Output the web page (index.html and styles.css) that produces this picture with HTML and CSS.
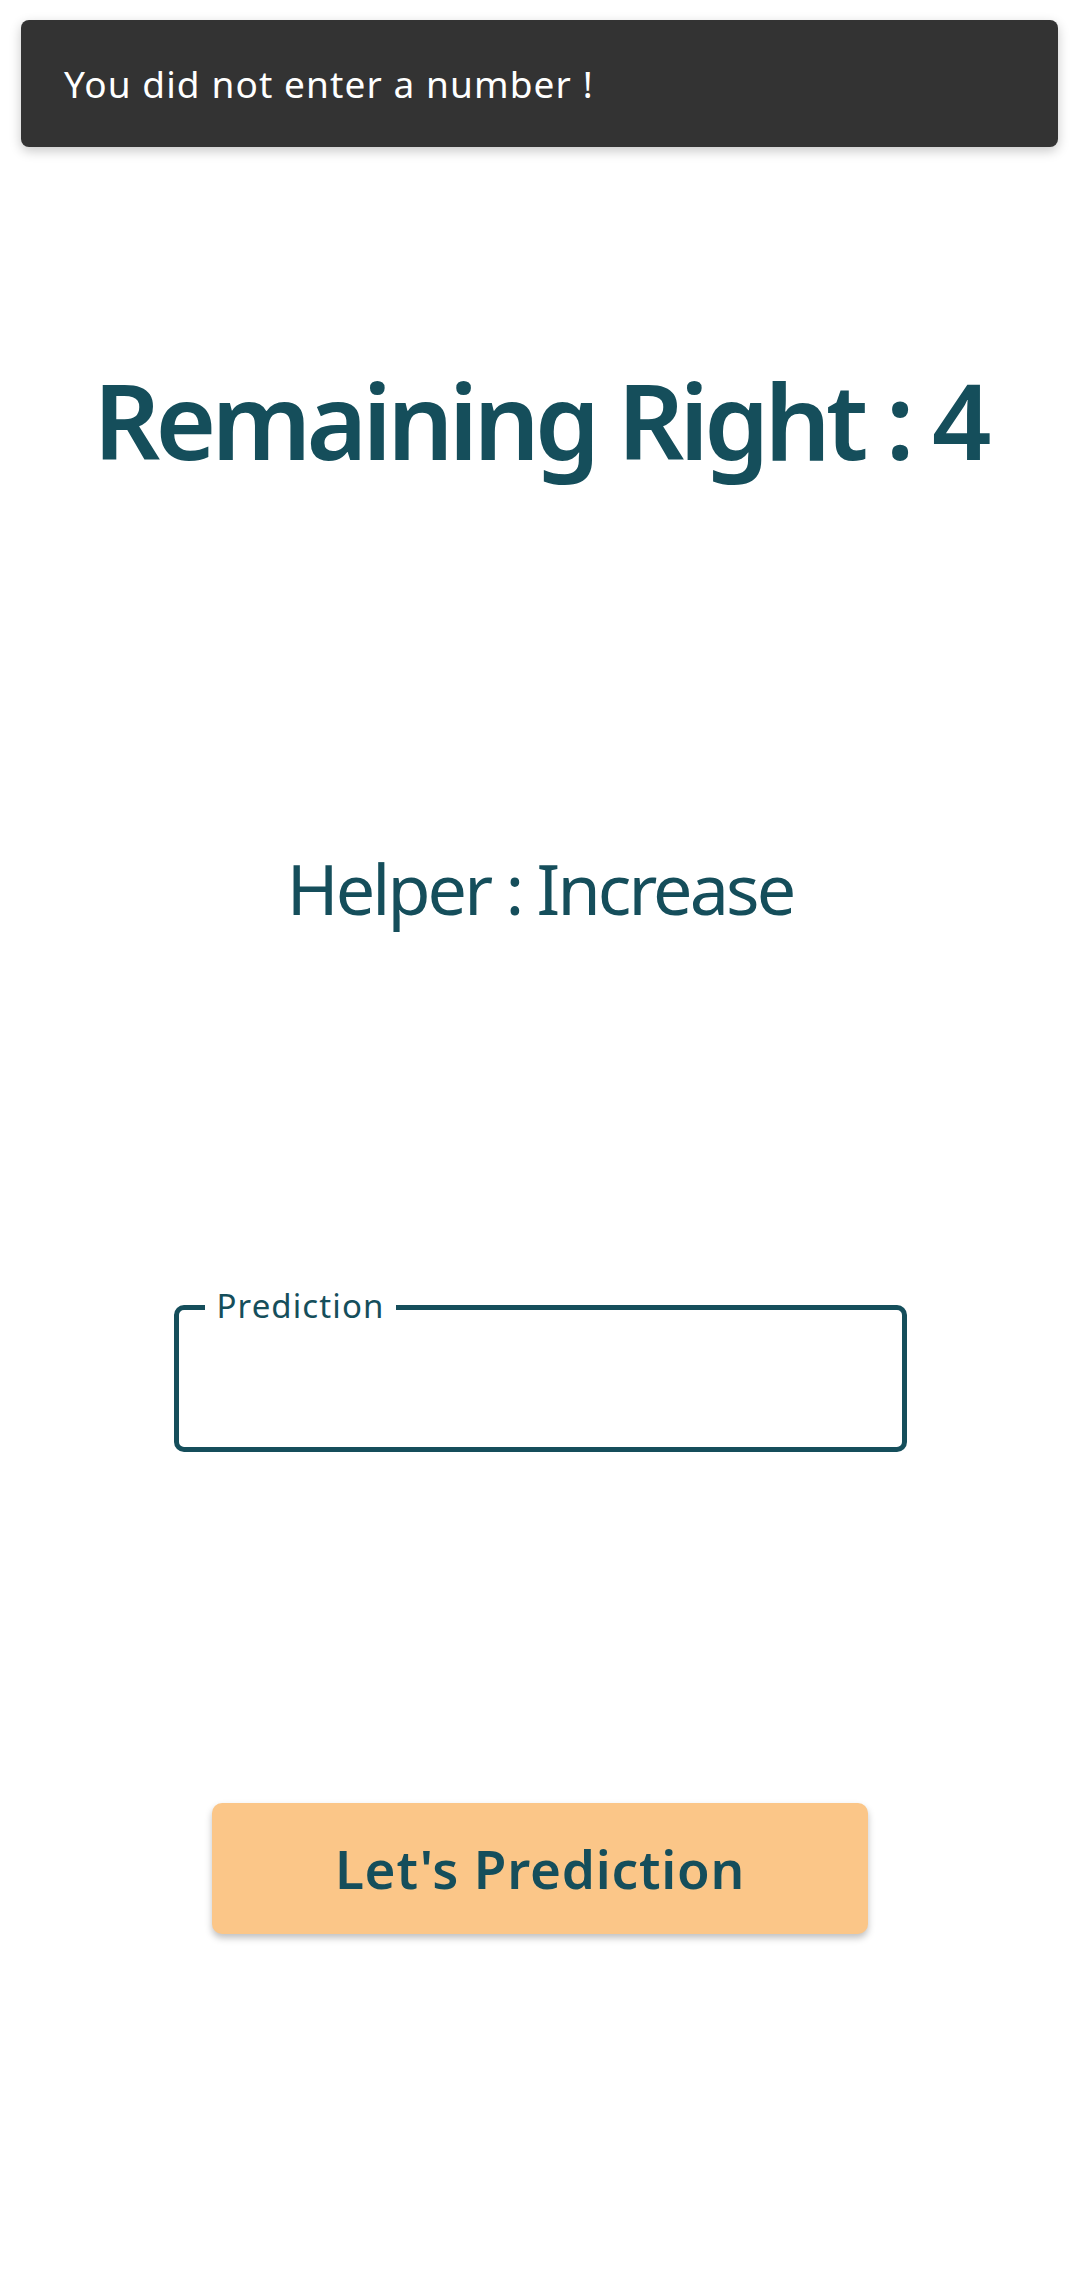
FILE: index.html
```html
<!DOCTYPE html>
<html lang="en">
<head>
<meta charset="utf-8">
<title>Prediction</title>
<link rel="stylesheet" href="styles.css">
</head>
<body>
<div class="snackbar"><span class="snack-text">You did not enter a number !</span></div>
<main class="screen">
  <h1 class="title">Remaining Right : 4</h1>
  <p class="helper">Helper : Increase</p>
  <div class="field">
    <span class="field-label">Prediction</span>
    <input class="field-input" type="text" aria-label="Prediction">
  </div>
  <button class="action" type="button">Let's Prediction</button>
</main>
</body>
</html>
```
FILE: styles.css
```css
html, body {
  margin: 0;
  padding: 0;
  background: #ffffff;
}
body {
  font-family: "Noto Sans", "Open Sans", sans-serif;
  color: #154e5b;
  width: 1080px;
  min-height: 2285px;
  position: relative;
}
.snackbar {
  position: absolute;
  top: 20px;
  left: 21px;
  right: 22px;
  height: 127px;
  box-sizing: border-box;
  background: #333333;
  border-radius: 8px;
  box-shadow: 0 4px 12px rgba(0,0,0,0.22);
  display: flex;
  align-items: center;
  padding-left: 43px;
}
.snack-text {
  color: #ffffff;
  font-size: 37px;
  line-height: 44px;
  letter-spacing: 1.1px;
}
.screen {
  display: flex;
  flex-direction: column;
  align-items: center;
  padding-top: 357px;
}
.title {
  margin: 0;
  font-size: 104px;
  line-height: 126px;
  font-weight: 600;
  letter-spacing: -4.8px;
}
.helper {
  margin: 363px 0 0;
  font-size: 70px;
  line-height: 84px;
  font-weight: 400;
  letter-spacing: -2.9px;
}
.field {
  position: relative;
  margin-top: 375px;
  width: 733px;
  height: 147px;
  box-sizing: border-box;
  border: 5px solid #154e5b;
  border-radius: 10px;
}
.field-label {
  position: absolute;
  top: -24px;
  left: 26px;
  padding: 0 12px;
  background: #ffffff;
  font-size: 33px;
  line-height: 40px;
  letter-spacing: 1.1px;
}
.field-input {
  width: 100%;
  height: 100%;
  box-sizing: border-box;
  border: 0;
  outline: none;
  background: transparent;
  font: inherit;
  font-size: 45px;
  padding: 0 40px;
}
.action {
  margin-top: 351px;
  width: 656px;
  height: 131px;
  border: 0;
  border-radius: 10px;
  background: #fbc688;
  box-shadow: 0 4px 7px rgba(0,0,0,0.25);
  color: #154e5b;
  font-family: "Noto Sans", "Open Sans", sans-serif;
  font-size: 53px;
  font-weight: 600;
  letter-spacing: 0.8px;
  padding: 0;
}
```
